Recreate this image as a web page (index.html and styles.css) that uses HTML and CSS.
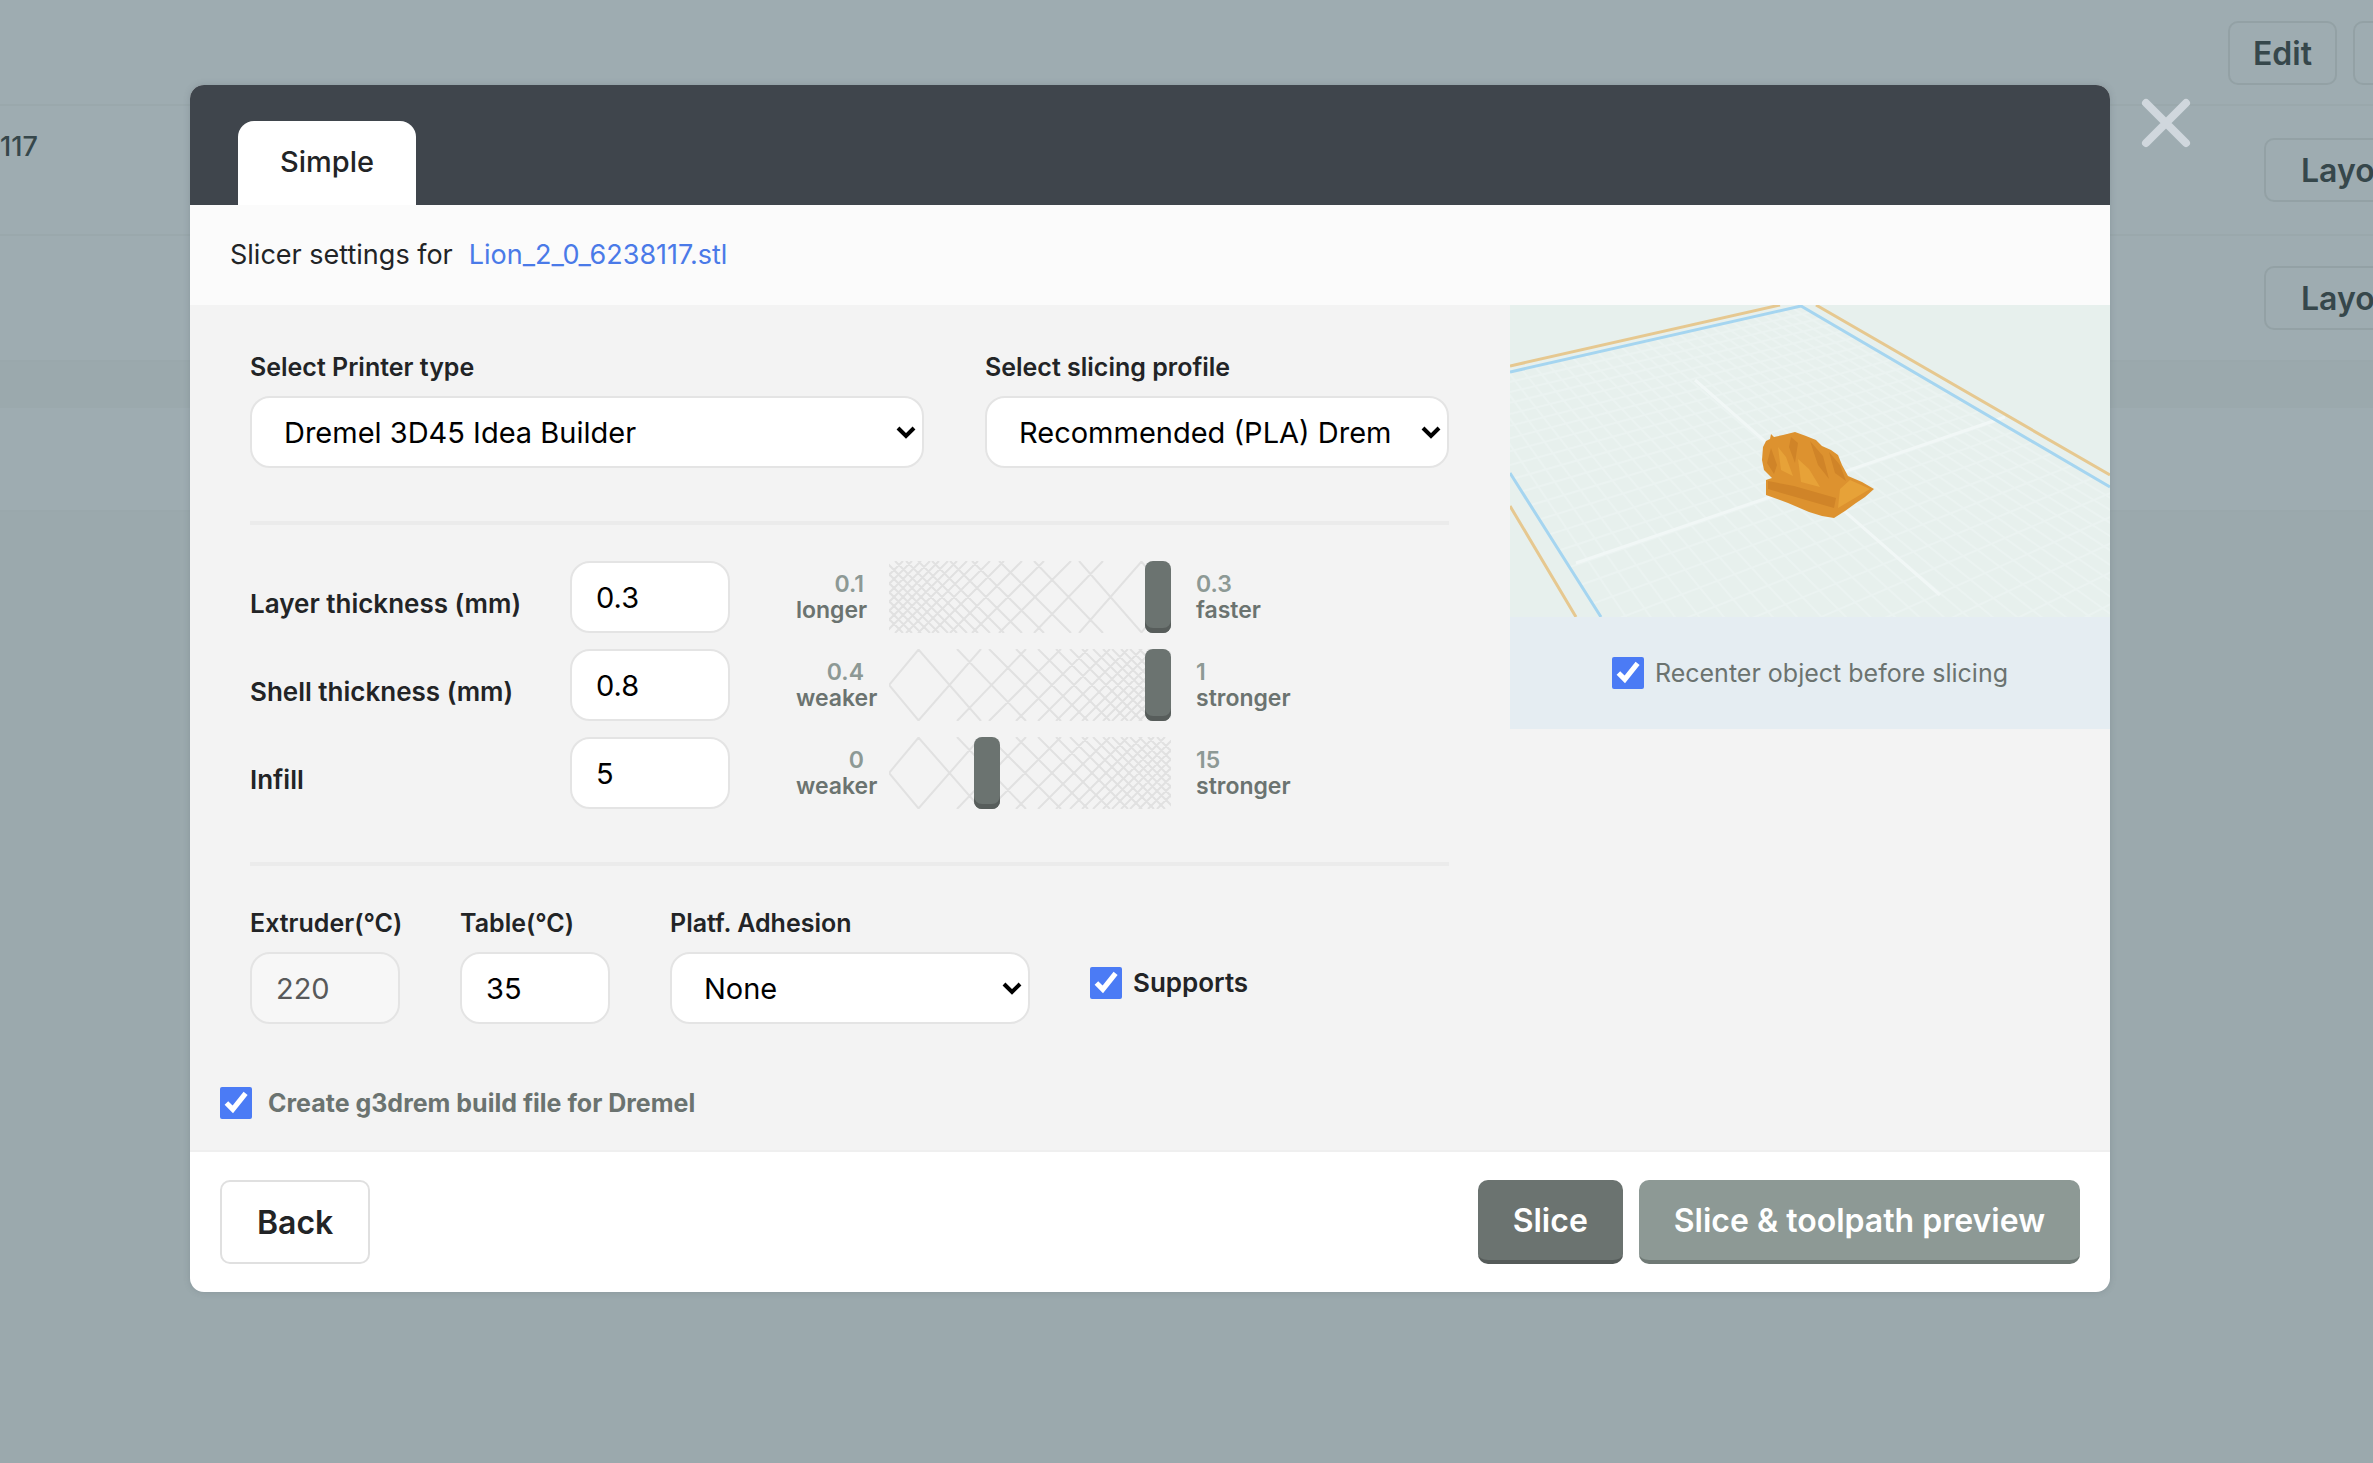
FILE: index.html
```html
<!DOCTYPE html>
<html lang="en">
<head>
    <meta charset="UTF-8">
    <meta name="viewport" content="width=device-width, initial-scale=1.0">
    <title>Slicer settings</title>
    <link rel="stylesheet" href="styles.css">
</head>
<body>
    <!-- File list behind the dialog -->
    <main class="page">
        <div class="toolbar">
            <button class="page-button">Edit</button>
            <button class="page-button cut" aria-label="More"></button>
        </div>
        <div class="file-row first">
            <span class="file-name">117</span>
            <button class="page-button layout">Layo</button>
        </div>
        <div class="file-row">
            <button class="page-button layout">Layo</button>
        </div>
        <div class="file-row empty"></div>
    </main>

    <div class="overlay">
        <div class="modal" role="dialog" aria-label="Slicer settings">
            <button class="close" aria-label="Close">
                <svg viewBox="0 0 50 50"><path d="M5 5L45 45M45 5L5 45"/></svg>
            </button>

            <div class="tabs">
                <button class="tab">Simple</button>
            </div>

            <div class="subtitle">
                <span>Slicer settings for</span>
                <a href="#">Lion_2_0_6238117.stl</a>
            </div>

            <div class="content">
                <div class="form">
                    <div class="section profile">
                        <div class="field">
                            <label for="printer">Select Printer type</label>
                            <div class="select">
                                <select id="printer"><option>Dremel 3D45 Idea Builder</option></select>
                                <svg viewBox="0 0 20 14"><path d="M2 2L10 10L18 2"/></svg>
                            </div>
                        </div>
                        <div class="field">
                            <label for="profile">Select slicing profile</label>
                            <div class="select">
                                <select id="profile"><option>Recommended (PLA) Dremel 3D45</option></select>
                                <svg viewBox="0 0 20 14"><path d="M2 2L10 10L18 2"/></svg>
                            </div>
                        </div>
                    </div>

                    <div class="section sliders">
                        <div class="slider-row">
                            <label for="layer">Layer thickness (mm)</label>
                            <input type="text" id="layer" value="0.3">
                            <div class="limit min"><span>0.1</span><b>longer</b></div>
                            <div class="slider">
                                <svg class="flipped" viewBox="0 0 282 72"><use href="#mesh"/></svg>
                                <input type="range" min="0.1" max="0.3" step="0.1" value="0.3" aria-label="Layer thickness">
                            </div>
                            <div class="limit"><span>0.3</span><b>faster</b></div>
                        </div>
                        <div class="slider-row">
                            <label for="shell">Shell thickness (mm)</label>
                            <input type="text" id="shell" value="0.8">
                            <div class="limit min"><span>0.4</span><b>weaker</b></div>
                            <div class="slider">
                                <svg viewBox="0 0 282 72"><use href="#mesh"/></svg>
                                <input type="range" min="0.4" max="1" step="0.2" value="1" aria-label="Shell thickness">
                            </div>
                            <div class="limit"><span>1</span><b>stronger</b></div>
                        </div>
                        <div class="slider-row">
                            <label for="infill">Infill</label>
                            <input type="text" id="infill" value="5">
                            <div class="limit min"><span>0</span><b>weaker</b></div>
                            <div class="slider">
                                <svg viewBox="0 0 282 72"><use href="#mesh"/></svg>
                                <input type="range" min="0" max="15" value="5" aria-label="Infill">
                            </div>
                            <div class="limit"><span>15</span><b>stronger</b></div>
                        </div>
                    </div>

                    <div class="section machine">
                        <div class="field temp">
                            <label for="extruder">Extruder(°C)</label>
                            <input type="text" id="extruder" value="220" disabled>
                        </div>
                        <div class="field temp">
                            <label for="table">Table(°C)</label>
                            <input type="text" id="table" value="35">
                        </div>
                        <div class="field adhesion">
                            <label for="adhesion">Platf. Adhesion</label>
                            <div class="select">
                                <select id="adhesion"><option>None</option></select>
                                <svg viewBox="0 0 20 14"><path d="M2 2L10 10L18 2"/></svg>
                            </div>
                        </div>
                        <label class="check supports"><input type="checkbox" checked>Supports</label>
                    </div>

                    <label class="check build"><input type="checkbox" checked>Create g3drem build file for Dremel</label>
                </div>

                <div class="preview">
                    <svg class="bed" viewBox="0 0 600 312" preserveAspectRatio="xMidYMid slice">
                        <clipPath id="bedArea"><polygon points="-56,80 291,1 861,335 335,695"/></clipPath>
                        <g id="grid" clip-path="url(#bedArea)"></g>
                        <path class="axis" d="M66 258L495 112M185 75L430 290"/>
                        <path class="outer" d="M0 61L270 0M306 0L600 170M0 201L66 312"/>
                        <path class="inner" d="M0 67L291 1L600 182M0 168L91 312"/>
                        <!-- Lion model -->
                        <path fill="#dd922f" d="M253 142L256 136L260 134L261 129L264 132L273 130L285 127L296 131L306 135L312 141L321 145L328 150L332 160L338 171L352 177L364 184L355 192L346 198L335 206L324 213L312 211L299 207L278 198L256 190L256 175L262 173L254 165L252 155Z"/>
                        <path fill="#d08428" d="M258 176L284 181L326 193L324 203L296 195L258 184ZM281 132L288 138L285 158L279 142ZM300 136L313 151L319 174L308 160ZM319 147L330 160L336 176L325 168ZM261 143L267 160L264 169L257 158Z"/>
                        <path fill="#e7a238" d="M330 184L340 175L360 184L328 203ZM268 142L276 152L283 171L271 165ZM288 154L299 164L310 182L291 177Z"/>
                    </svg>
                    <label class="check recenter"><input type="checkbox" checked>Recenter object before slicing</label>
                </div>
            </div>

            <div class="actions">
                <button class="back">Back</button>
                <button class="primary">Slice</button>
                <button class="primary light">Slice &amp; toolpath preview</button>
            </div>
        </div>
    </div>

    <!-- Mesh that gets denser to the right -->
    <svg width="0" height="0" class="defs">
        <symbol id="mesh" viewBox="0 0 282 72">
            <path d="M30 0L0 36L30 72M29 0L92 72M29 72L92 0M68 0L137 72M68 72L137 0M100 0L172 72M100 72L172 0M127 0L199 72M127 72L199 0M149 0L221 72M149 72L221 0M167 0L239 72M167 72L239 0M181 0L253 72M181 72L253 0M193 0L265 72M193 72L265 0M204 0L276 72M204 72L276 0M214 0L286 72M214 72L286 0M223 0L295 72M223 72L295 0M232 0L304 72M232 72L304 0M241 0L313 72M241 72L313 0M250 0L322 72M250 72L322 0M259 0L331 72M259 72L331 0M268 0L340 72M268 72L340 0"/>
        </symbol>
    </svg>

    <script>
        // Build plate grid: two sets of lines, each running to its own vanishing point
        const grid = document.getElementById('grid');

        function addLines(vanishX, vanishY, startX, step) {
            for (let i = 1; i < 30; i++) {
                const line = document.createElementNS('http://www.w3.org/2000/svg', 'line');
                const x = startX + i * step;
                line.setAttribute('x1', vanishX);
                line.setAttribute('y1', vanishY);
                // carry on past the lower edge
                line.setAttribute('x2', x + (x - vanishX));
                line.setAttribute('y2', 300 + (300 - vanishY));
                grid.appendChild(line);
            }
        }

        addLines(-343, -370, 84, 24);
        addLines(1873, -358, -1026, 65);
    </script>
</body>
</html>
```

FILE: styles.css
```css
* {
    box-sizing: border-box;
}
body {
    margin: 0;
    min-height: 100vh;
    overflow: hidden;
    background-color: #9ba9ad;
    font-family: Inter, "Open Sans", sans-serif;
    font-size: 25px;
    line-height: 30px;
    color: #222426;
}
button, input, select {
    font-family: inherit;
    margin: 0;
}
button {
    cursor: pointer;
}
svg {
    display: block;
    fill: none;
}
.defs {
    position: absolute;
}

/* page behind the dialog */
.toolbar {
    display: flex;
    justify-content: flex-end;
    gap: 16px;
    height: 106px;
    padding-top: 21px;
    background-color: #9eacb1;
    border-bottom: 2px solid #9aa8ac;
}
.page-button {
    height: 64px;
    padding: 0 23px;
    border: 2px solid #93a1a5;
    border-radius: 10px;
    background: none;
    color: #36474b;
    font-size: 32px;
    font-weight: 600;
}
.page-button.cut {
    width: 100px;
    margin-right: -80px;
}
.page-button.layout {
    width: 160px;
    margin-left: auto;
    margin-right: -51px;
    padding: 0 35px;
    text-align: left;
}
.file-row {
    display: flex;
    align-items: center;
    height: 126px;
    background-color: #9eacb1;
    border-bottom: 2px solid #9aa8ac;
}
.file-row.first {
    height: 130px;
}
.file-name {
    align-self: flex-start;
    padding-top: 26px;
    font-size: 27px;
    font-weight: 500;
    color: #36474b;
}
.file-row.empty {
    height: 104px;
    margin-top: 46px;
}

/* dialog */
.overlay {
    position: absolute;
    inset: 0;
    padding: 85px 263px 0 190px;
}
.modal {
    position: relative;
    border-radius: 14px;
    background-color: #fff;
    box-shadow: 0 0 6px rgba(80, 90, 100, 0.25);
}
.close {
    position: absolute;
    top: 13px;
    left: 100%;
    width: 50px;
    height: 50px;
    margin-left: 31px;
    padding: 0;
    border: none;
    background: none;
}
.close svg {
    stroke: #d0d7dd;
    stroke-width: 8;
    stroke-linecap: round;
}
.tabs {
    display: flex;
    height: 120px;
    padding: 36px 48px 0;
    border-radius: 14px 14px 0 0;
    background-color: #3f454c;
}
.tab {
    width: 178px;
    padding: 0 0 4px;
    border: none;
    border-radius: 16px 16px 0 0;
    background-color: #fff;
    color: #222426;
    font-size: 29px;
    font-weight: 500;
}
.subtitle {
    display: flex;
    align-items: center;
    gap: 16px;
    height: 100px;
    padding: 0 40px;
    background-color: #fbfbfb;
    font-size: 27px;
}
.subtitle a {
    color: #4a7ae8;
    text-decoration: none;
}
.content {
    display: flex;
    align-items: flex-start;
    background-color: #f3f3f3;
    border-bottom: 2px solid #efefef;
}
.form {
    flex: 1;
    padding: 47px 61px 31px 60px;
}
.section {
    padding-bottom: 53px;
    border-bottom: 4px solid #ebebeb;
    margin-bottom: 36px;
}
.field {
    display: flex;
    flex-direction: column;
    gap: 14px;
}
label {
    font-weight: 600;
}
input[type="text"], select {
    width: 100%;
    height: 72px;
    padding: 0 24px;
    border: 2px solid #e4e4e4;
    border-radius: 20px;
    background-color: #fff;
    color: #000;
    font-size: 29px;
}
input[type="text"]:disabled {
    background-color: #f7f7f7;
    color: #58595a;
}
.select {
    position: relative;
}
select {
    appearance: none;
    padding: 0 56px 0 32px;
}
.select svg {
    position: absolute;
    top: 30px;
    right: 8px;
    width: 20px;
    height: 14px;
    stroke: #000;
    stroke-width: 4;
    pointer-events: none;
}
.profile {
    display: grid;
    grid-template-columns: 674fr 464fr;
    gap: 61px;
}

/* sliders */
.sliders {
    display: flex;
    flex-direction: column;
    gap: 16px;
    margin-bottom: 42px;
}
.slider-row {
    display: flex;
    align-items: center;
}
.slider-row label {
    width: 320px;
    padding-top: 14px;
    font-size: 26px;
}
.slider-row input[type="text"] {
    width: 160px;
    margin-right: 66px;
}
.limit {
    line-height: 26px;
    font-size: 23px;
    font-weight: 600;
    color: #8d9995;
}
.limit span, .limit b {
    display: block;
}
.limit b {
    font-weight: 600;
    color: #6b7370;
}
.limit.min {
    width: 68px;
    margin-right: 25px;
}
.limit.min span {
    text-align: right;
}
.slider {
    position: relative;
    width: 282px;
    height: 72px;
    margin-right: 25px;
}
.slider svg {
    width: 100%;
    height: 100%;
    stroke: #e1e1e1;
    stroke-width: 2;
}
.slider .flipped {
    transform: scaleX(-1);
}
.slider input {
    appearance: none;
    position: absolute;
    inset: 0;
    width: 100%;
    height: 100%;
    background: none;
}
.slider input::-webkit-slider-thumb {
    appearance: none;
    width: 26px;
    height: 72px;
    border-radius: 8px;
    background-color: #6b7370;
    box-shadow: inset 0 -5px 0 #575d5b;
}

/* temperatures and adhesion */
.machine {
    display: flex;
    align-items: flex-start;
    gap: 60px;
    margin-bottom: 0;
    padding-bottom: 63px;
    border-bottom: none;
}
.temp {
    width: 150px;
}
.adhesion {
    width: 360px;
}
.check {
    display: flex;
    align-items: center;
}
.check input {
    width: 32px;
    height: 32px;
    margin-right: 11px;
    accent-color: #4b7bf5;
}
.supports {
    margin-top: 59px;
    font-size: 26px;
}
.build {
    margin-left: -30px;
    color: #6b7370;
    font-weight: 700;
}
.build input {
    margin-right: 16px;
}

/* 3D preview */
.preview {
    width: 600px;
    background-color: #e5edf2;
}
.bed {
    width: 100%;
    height: 312px;
    background-color: #e7f0ed;
    stroke-width: 3;
}
.bed line {
    stroke: #ebf3f1;
    stroke-width: 2;
}
.bed .axis {
    stroke: #f1f7f6;
}
.bed .outer {
    stroke: #e6c890;
}
.bed .inner {
    stroke: #a5d5f0;
}
.recenter {
    justify-content: center;
    height: 112px;
    color: #6b7370;
    font-weight: 400;
}

/* footer */
.actions {
    display: flex;
    align-items: center;
    gap: 16px;
    padding: 28px 30px;
}
.actions button {
    height: 84px;
    padding: 0 35px;
    border: 2px solid #e0e0e0;
    border-radius: 10px;
    background-color: #fff;
    color: #222426;
    font-size: 32px;
    font-weight: 600;
}
.actions .back {
    margin-right: auto;
}
.actions .primary {
    border: none;
    border-bottom: 4px solid #555b59;
    background-color: #6b7370;
    color: #fff;
}
.actions .light {
    border-bottom-color: #6f7975;
    background-color: #8d9995;
}
```
